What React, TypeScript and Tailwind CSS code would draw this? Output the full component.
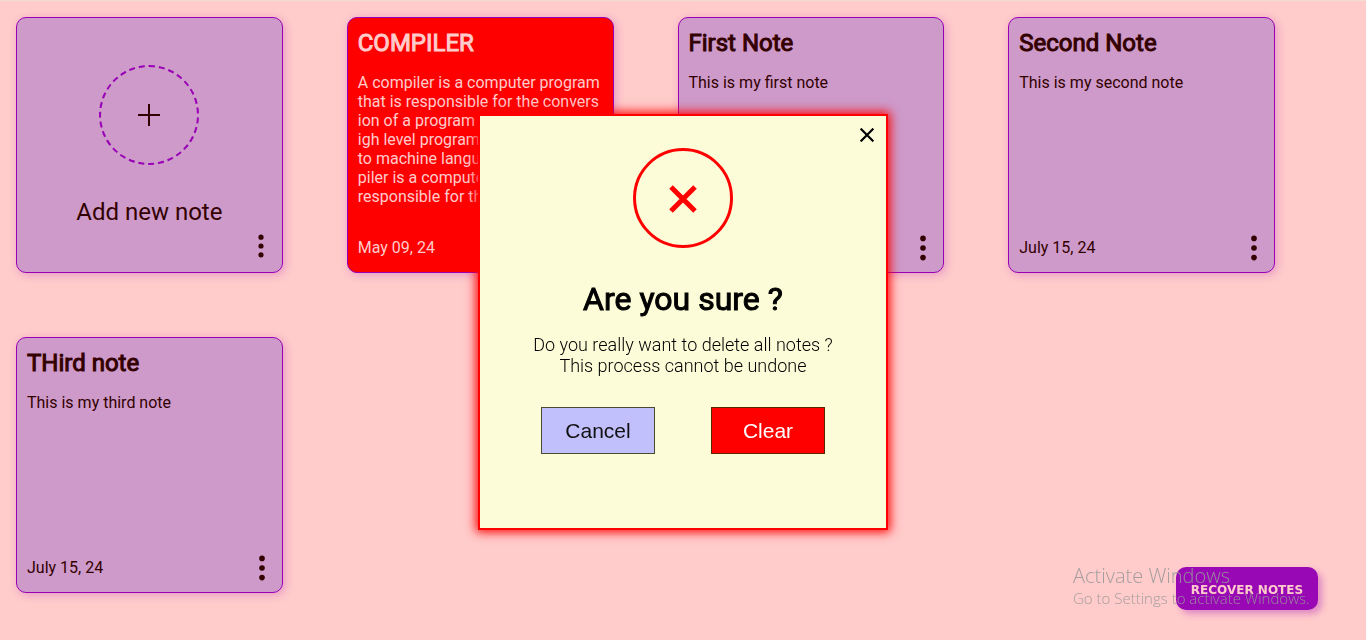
import React from "react";

type Note = {
  title: string;
  body: string;
  date: string;
  tone: "purple" | "red";
};

const notes: Note[] = [
  {
    title: "COMPILER",
    body: "A compiler is a computer program\nthat is responsible for the convers\nion of a program written in a h\nigh level programming language\nto machine language. A com\npiler is a computer program\nresponsible for the conversion",
    date: "May 09, 24",
    tone: "red",
  },
  { title: "First Note", body: "This is my first note", date: "July 15, 24", tone: "purple" },
  { title: "Second Note", body: "This is my second note", date: "July 15, 24", tone: "purple" },
  { title: "THird note", body: "This is my third note", date: "July 15, 24", tone: "purple" },
];

const tones = {
  purple: "bg-[#cd9aca] text-[#330000]",
  red: "bg-[#ff0000] text-[#ffcbcb]",
};

function Dots({ className }: { className: string }) {
  return (
    <svg viewBox="0 0 6 26" className={className} fill="currentColor" aria-hidden="true">
      <circle cx="3" cy="3.4" r="2.8" />
      <circle cx="3" cy="13" r="2.8" />
      <circle cx="3" cy="22.6" r="2.8" />
    </svg>
  );
}

function AddCard() {
  return (
    <article className="flex h-64 flex-col items-center rounded-[10px] border border-[#9900b5] bg-[#cd9aca] pt-[47px] text-[#330000] shadow-[2px_2px_8px_#9900b540]">
      <button type="button" className="flex flex-col items-center gap-[33px]" aria-label="Add new note">
        <span className="flex size-25 items-center justify-center rounded-full border-2 border-dashed border-[#9900b5]">
          <svg viewBox="0 0 22 22" className="size-[22px]" stroke="currentColor" strokeWidth="2" aria-hidden="true">
            <path d="M11 0V22M0 11H22" />
          </svg>
        </span>
        <span className="text-2xl leading-7">Add new note</span>
      </button>
      <button type="button" aria-label="More options" className="mt-2 mr-[18px] self-end">
        <Dots className="h-6 w-[6px]" />
      </button>
    </article>
  );
}

function NoteCard({ note }: { note: Note }) {
  return (
    <article
      className={`flex h-64 flex-col rounded-[10px] border border-[#9900b5] px-[10px] pt-[11px] pb-[11px] shadow-[2px_2px_8px_#9900b540] ${tones[note.tone]}`}
    >
      <h2 className="text-2xl leading-7 font-normal [-webkit-text-stroke:1px]">{note.title}</h2>
      <p className="mt-4 text-base leading-[19px] whitespace-pre">{note.body}</p>
      <footer className="mt-auto flex items-center justify-between">
        <time className="pb-px text-base leading-[19px]">{note.date}</time>
        <button type="button" aria-label="More options" className="mr-[7px]">
          <Dots className="h-[26px] w-[6px]" />
        </button>
      </footer>
    </article>
  );
}

function ConfirmDialog() {
  return (
    <div className="fixed inset-0 flex items-center justify-center pt-1">
      <section
        role="dialog"
        aria-modal="true"
        aria-labelledby="confirm-title"
        className="relative flex h-[416px] w-[410px] flex-col items-center border-2 border-[#ff0000] bg-[#fcfcd8] pt-8 text-black shadow-[0_0_10px_2px_#ff0000]"
      >
        <button type="button" aria-label="Close" className="absolute top-3 right-3">
          <svg viewBox="0 0 14 14" className="size-[14px]" stroke="currentColor" strokeWidth="2.2" aria-hidden="true">
            <path d="M0.6 0.6L13.4 13.4M13.4 0.6L0.6 13.4" />
          </svg>
        </button>
        <div className="flex size-25 items-center justify-center rounded-full border-3 border-[#ff0000] pt-[2px]">
          <svg viewBox="0 0 28 28" className="size-7" stroke="#ff0000" strokeWidth="5" aria-hidden="true">
            <path d="M2 2L26 26M26 2L2 26" />
          </svg>
        </div>
        <h1 id="confirm-title" className="mt-[31px] text-[32px] leading-10 font-normal [-webkit-text-stroke:1px]">
          Are you sure ?
        </h1>
        <p className="mt-[15px] text-center text-lg leading-[21px] font-light">
          Do you really want to delete all notes ?
          <br />
          This process cannot be undone
        </p>
        <div className="mt-[31px] flex gap-14 font-['Liberation_Sans',sans-serif] text-[21px] leading-6">
          <button type="button" className="h-[47px] w-[114px] border border-[#4a4a30] bg-[#c1bffc] text-[#111111]">
            Cancel
          </button>
          <button type="button" className="h-[47px] w-[114px] border border-[#5a2800] bg-[#ff0000] text-white">
            Clear
          </button>
        </div>
      </section>
    </div>
  );
}

export default function App() {
  return (
    <div className="min-h-screen border-t border-[#f0dcd0] bg-[#ffcbcb] font-[Roboto,sans-serif]">
      <main className="grid grid-cols-4 gap-16 py-4 pr-[91px] pl-4">
        <AddCard />
        {notes.map((note) => (
          <NoteCard key={note.title} note={note} />
        ))}
      </main>
      <button
        type="button"
        className="fixed right-12 bottom-[30px] h-[43px] w-[142px] rounded-[10px] bg-[#9908b5] pt-[2px] font-['DejaVu_Sans',sans-serif] text-[12px] font-bold text-[#ffcbcb] shadow-[4px_4px_6px_#9900b550]"
      >
        RECOVER NOTES
      </button>
      <ConfirmDialog />
      <aside className="pointer-events-none fixed right-14 bottom-8 w-[237px] font-['Open_Sans',sans-serif] font-light whitespace-nowrap text-[#999999]/90">
        <p className="text-xl leading-6">Activate Windows</p>
        <p className="text-[15px] leading-5">Go to Settings to activate Windows.</p>
      </aside>
    </div>
  );
}
